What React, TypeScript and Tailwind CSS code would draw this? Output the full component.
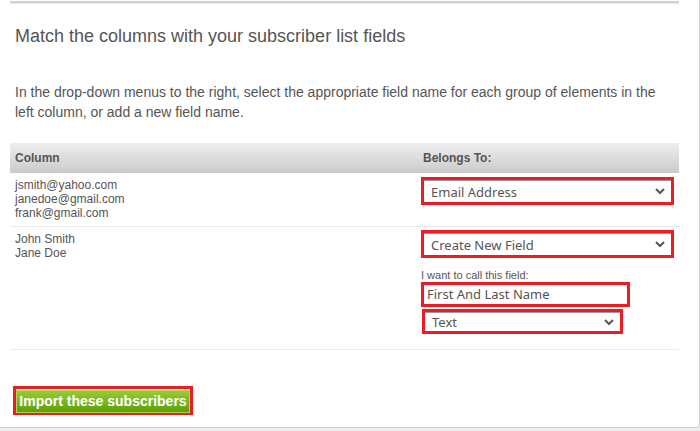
import React from 'react';

const Chevron = () => (
    <svg width="10" height="7" viewBox="0 0 10 7" className="absolute right-[6px] top-1/2 -translate-y-1/2">
        <path d="M1 1.5 L5 5.5 L9 1.5" stroke="#555" strokeWidth="2" fill="none" />
    </svg>
);

const RedSelect = ({ value, className }: { value: string; className: string }) => (
    <div className={`relative border-[3px] border-[#ed1c24] bg-white ${className}`}>
        <div className="h-full border-t border-[#999] pl-[7px] text-[13px] leading-[20px] text-[#555] flex items-center" style={{ fontFamily: '"Noto Sans", sans-serif' }}>
            {value}
        </div>
        <Chevron />
    </div>
);

const App: React.FC = () => {
    return (
        <div className="w-[700px] h-[431px] bg-[#efefef] overflow-hidden" style={{ fontFamily: '"Liberation Sans", Arial, sans-serif' }}>
            <div className="w-[700px] h-[428px] bg-white border-r border-b border-[#cfcfcf] rounded-br-[4px] pt-[1px]">
                <div className="mx-[10px] w-[669px] border-t-2 border-[#d2d2d2] border-b border-b-[#e8e8e8]" />
                <h1 className="mt-[21px] ml-[15px] text-[18px] leading-[22px] text-[#555]">
                    Match the columns with your subscriber list fields
                </h1>
                <p className="mt-[35px] ml-[15px] w-[650px] text-[14px] leading-[20px] text-[#555]">
                    In the drop-down menus to the right, select the appropriate field name for each group of elements in the left column, or add a new field name.
                </p>

                <div className="ml-[10px] w-[669px] mt-[21px] text-[#555]">
                    <div className="h-[30px] flex items-center bg-gradient-to-b from-[#eeeeee] to-[#cbcbcb] text-[12px] font-bold">
                        <div className="w-[408px] pl-[5px]">Column</div>
                        <div className="pl-[5px]">Belongs To:</div>
                    </div>

                    <div className="flex h-[54px] border-b border-[#ebebeb]">
                        <div className="w-[408px] pl-[5px] pt-[5px] text-[12px] leading-[14px]">
                            <div>jsmith@yahoo.com</div>
                            <div>janedoe@gmail.com</div>
                            <div>frank@gmail.com</div>
                        </div>
                        <div className="pt-[4px] pl-[3px]">
                            <RedSelect value="Email Address" className="w-[253px] h-[28px]" />
                        </div>
                    </div>

                    <div className="flex h-[123px] border-b border-[#ebebeb]">
                        <div className="w-[408px] pl-[5px] pt-[5px] text-[12px] leading-[14px]">
                            <div>John Smith</div>
                            <div>Jane Doe</div>
                        </div>
                        <div className="pt-[3px] pl-[3px]">
                            <RedSelect value="Create New Field" className="w-[253px] h-[28px]" />
                            <div className="mt-[11px] text-[11px] leading-[13px]">I want to call this field:</div>
                            <div className="w-[209px] h-[25px] border-[3px] border-[#ed1c24] flex items-center pl-[3px] text-[13px] text-[#555]" style={{ fontFamily: '"Noto Sans", sans-serif' }}>
                                First And Last Name
                            </div>
                            <div className="mt-[2px] ml-[1px]">
                                <RedSelect value="Text" className="w-[201px] h-[25px]" />
                            </div>
                        </div>
                    </div>
                </div>

                <div className="mt-[36px] ml-[13px] w-[180px] h-[29px] border-[3px] border-[#ed1c24]">
                    <button className="w-full h-full bg-gradient-to-b from-[#99cc33] to-[#5e9e00] border border-[#a8d860] text-white text-[14px] font-bold leading-none">
                        Import these subscribers
                    </button>
                </div>
            </div>
        </div>
    );
};

export default App;
